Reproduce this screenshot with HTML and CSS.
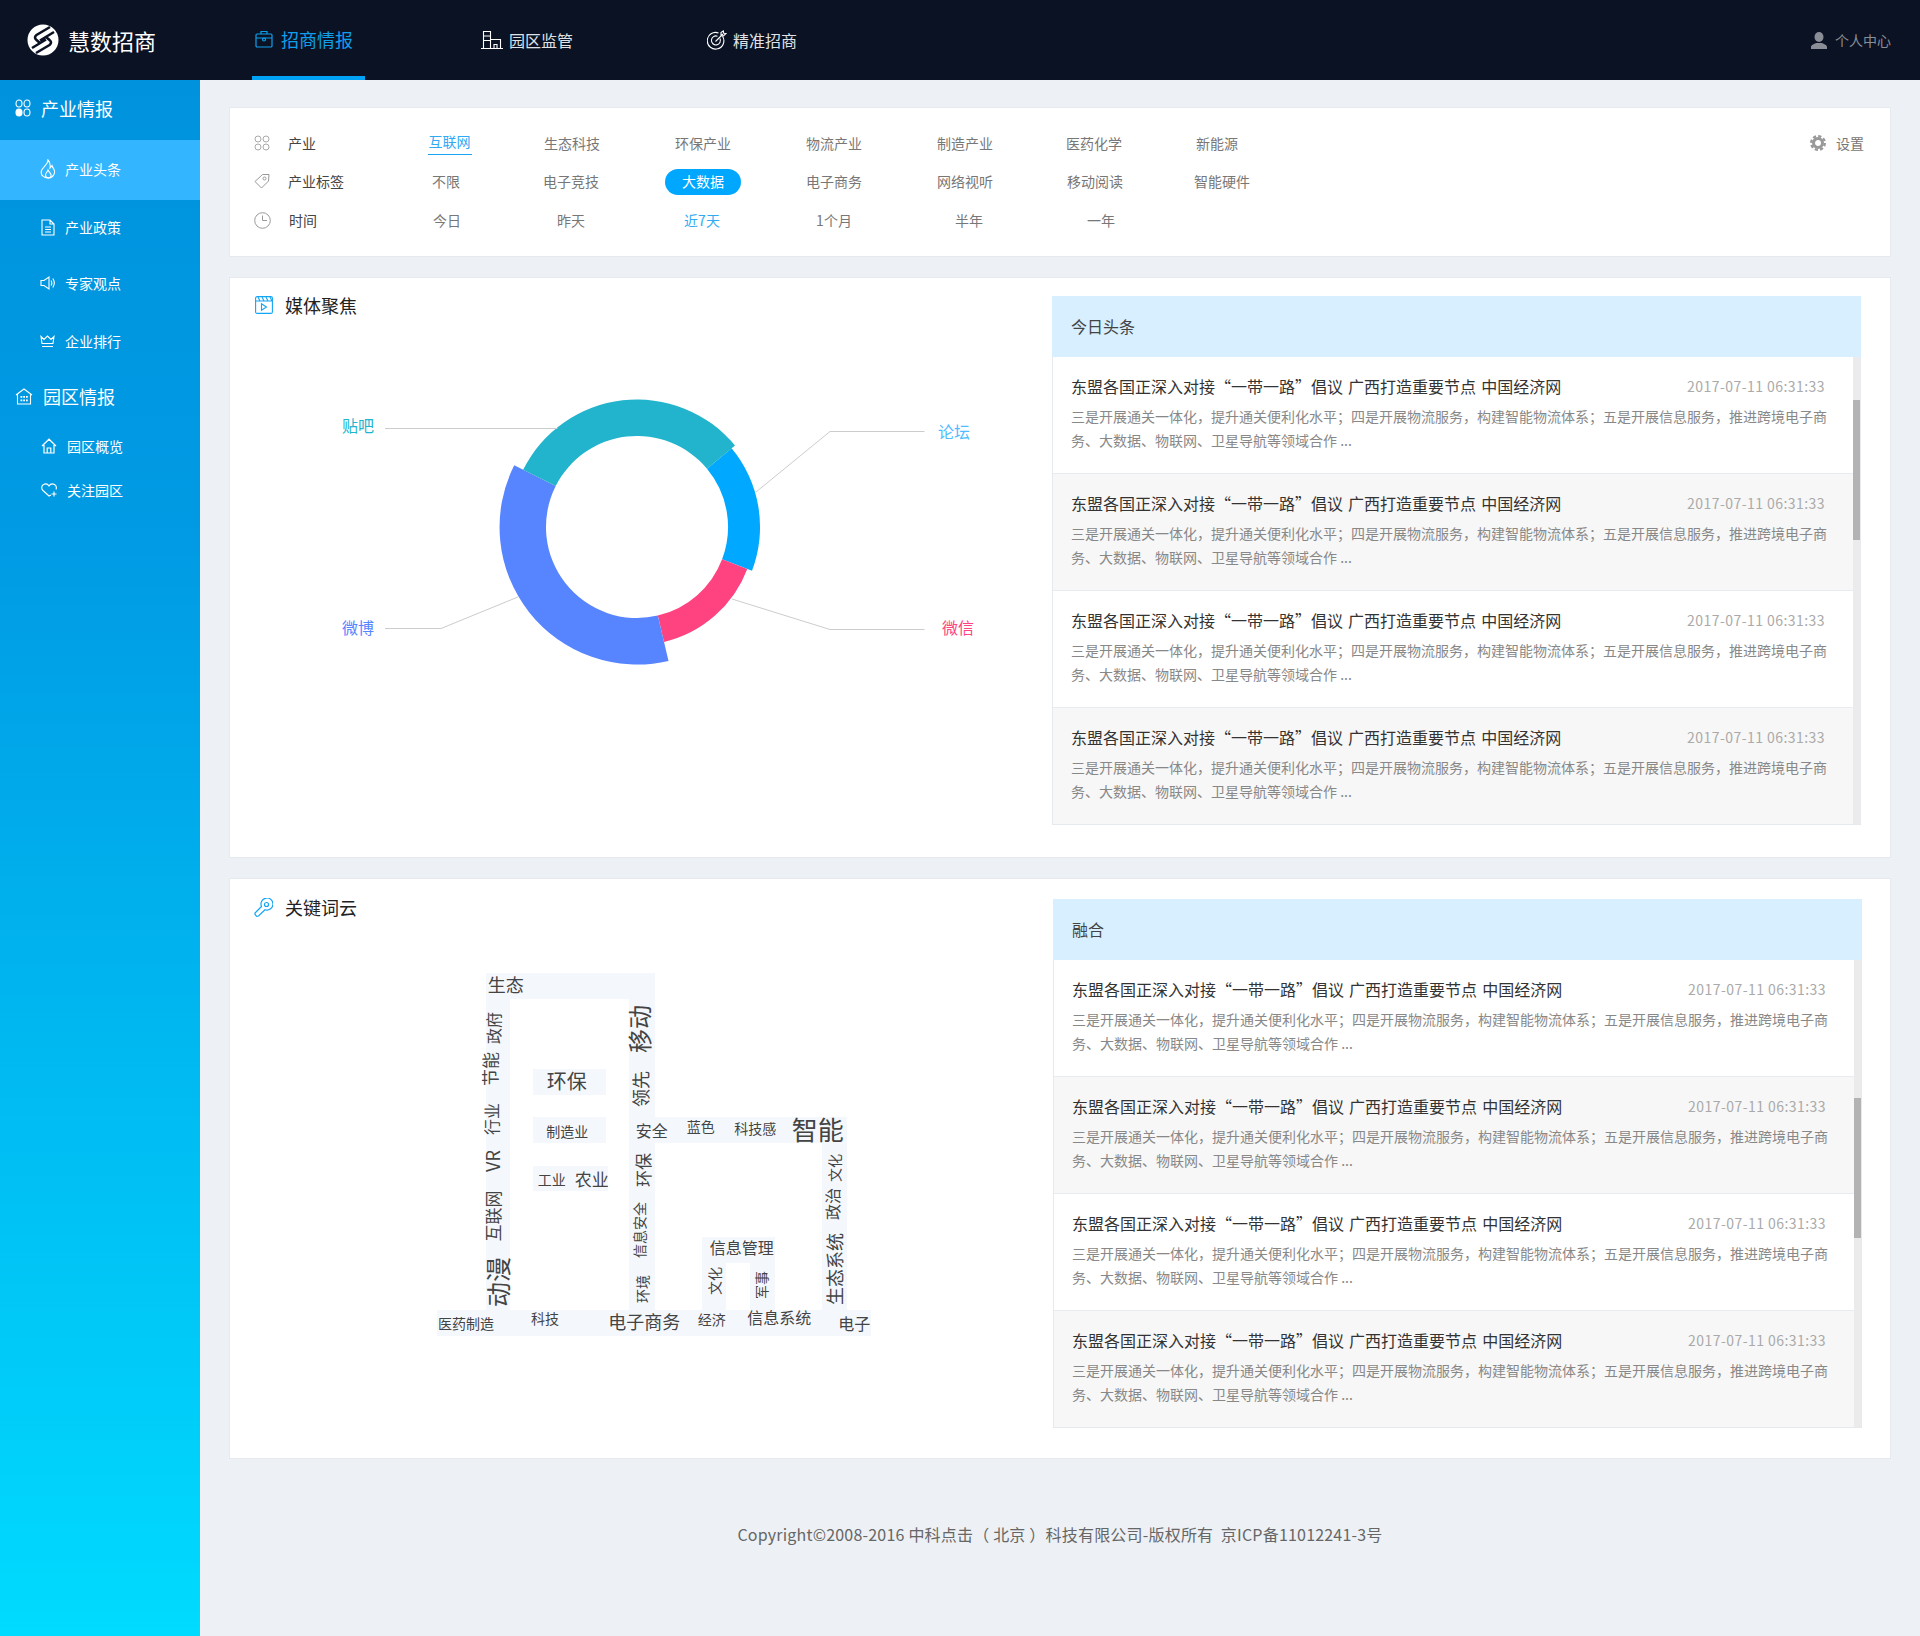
FILE: index.html
```html
<!DOCTYPE html>
<html lang="zh-CN">
<head>
  <meta charset="UTF-8">
  <title>慧数招商</title>
  <link rel="stylesheet" href="styles.css">
</head>
<body>

  <!-- 顶部导航 -->
  <header class="topbar">
    <div class="brand">
      <svg class="brand-logo" viewBox="0 0 32 32">
        <circle cx="16" cy="16" r="15.5" fill="#fff"/>
        <path d="M23 3 L9.5 11 Q6.5 13.5 9.5 16 L13.5 19.5 M27 8 L13 16.5 M9 29 L22.5 21 Q25.5 18.5 22.5 16 L18.5 12.5 M5 24 L19 15.5" fill="none" stroke="#0b1224" stroke-width="2.6"/>
      </svg>
      <span class="brand-name">慧数招商</span>
    </div>
    <nav class="topnav">
      <a class="topnav-item active">
        <svg width="18" height="18" viewBox="0 0 18 18" fill="none" stroke="#0f9fec" stroke-width="1.2">
          <rect x="1" y="4" width="16" height="13" rx="1"/>
          <path d="M6 4V1.5h6V4M1 8h16"/>
          <circle cx="9" cy="9.5" r="1.5"/>
        </svg>
        招商情报
      </a>
      <a class="topnav-item second">
        <svg width="22" height="20" viewBox="0 0 22 20" fill="none" stroke="#fff" stroke-width="1.1">
          <path d="M0 18.5h22M2.5 18.5V1.5h7v17M2.5 6h7M2.5 10.5h7M9.5 9.5h10v9M13 18.5v-4h3v4"/>
        </svg>
        园区监管
      </a>
      <a class="topnav-item third">
        <svg width="20" height="20" viewBox="0 0 20 20" fill="none" stroke="#fff" stroke-width="1.1">
          <path d="M15.5 6.2A8.3 8.3 0 1 1 11.5 3"/>
          <path d="M13 8.5A4.5 4.5 0 1 1 10.5 6.2"/>
          <path d="M8.5 11.5L16 4M14 2.5V5.5L16.5 6L19 3.5L16.7 3.2L16.3 1Z"/>
        </svg>
        精准招商
      </a>
    </nav>
    <div class="user-link">
      <svg width="16" height="17" viewBox="0 0 16 17" fill="#8a8d96">
        <ellipse cx="8" cy="5" rx="4.5" ry="5"/>
        <path d="M0 17v-2c0-2 3-3 5-4h6c2 1 5 2 5 4v2z"/>
      </svg>
      个人中心
    </div>
  </header>

  <div class="layout">

    <!-- 左侧菜单 -->
    <aside class="sidebar">
      <div class="side-group first">
        <svg width="16" height="18" viewBox="0 0 16 18" fill="none" stroke="#fff" stroke-width="1.1">
          <ellipse cx="4" cy="4.5" rx="3" ry="3.5"/>
          <ellipse cx="12" cy="4.5" rx="3" ry="3.5"/>
          <ellipse cx="4" cy="13.5" rx="3" ry="3.5" fill="#fff"/>
          <ellipse cx="12" cy="13.5" rx="3" ry="3.5"/>
        </svg>
        产业情报
      </div>
      <a class="side-item active">
        <svg width="16" height="20" viewBox="0 0 16 20" fill="none" stroke="#fff" stroke-width="1.1">
          <path d="M8 1C8.5 5 3 7.5 1.5 11.5C0 16 4 19 8 19C12 19 15 16 14.5 12C14 9.5 12.5 8.5 12 6.5C11 8 10.5 8.5 10 9C10.5 6 10 3 8 1Z"/>
          <path d="M8 11C7.5 13 5.5 14 5.5 16C5.5 18 7 19 8.5 19C10 19 11.5 17.5 11 15.5C10.5 14 9 13 8 11Z"/>
        </svg>
        产业头条
      </a>
      <a class="side-item">
        <svg width="16" height="17" viewBox="-1 0 16 17" fill="none" stroke="#fff" stroke-width="1.1">
          <path d="M1 1h8l4 4v11H1zM9 1v4h4M4 8h6M4 10.5h6M4 13h6"/>
        </svg>
        产业政策
      </a>
      <a class="side-item">
        <svg width="16" height="16" viewBox="0 0 16 16" fill="none" stroke="#fff" stroke-width="1.1">
          <path d="M1 5.5h3L9 2v12L4 10.5H1zM11 5.5c1 1.500 1 3.500 0 5M12.800 3.500c2 3 2 6 0 9"/>
        </svg>
        专家观点
      </a>
      <a class="side-item tall">
        <svg width="15" height="13" viewBox="0 0 15 13" fill="none" stroke="#fff" stroke-width="1.1">
          <path d="M1 1.500L4 4.500L7.500 1L11 4.500L14 1.500L13 8.500H2zM2 11.500h11"/>
        </svg>
        企业排行
      </a>
      <div class="side-group">
        <svg width="18" height="17" viewBox="0 0 18 17" fill="none" stroke="#fff" stroke-width="1.1">
          <path d="M1 7L9 1l8 6M2.500 6v10h13V6"/>
          <path d="M5.500 8h1.800v1.800H5.500zM8.200 8h1.800v1.800H8.200zM11 8h1.800v1.800H11zM5.500 11.500h1.800v1.800H5.500zM8.200 11.500h1.800v1.800H8.200zM11 11.500h1.800v1.800H11z" fill="#fff" stroke="none"/>
        </svg>
        园区情报
      </div>
      <a class="side-item park">
        <svg width="16" height="16" viewBox="0 0 16 16" fill="none" stroke="#fff" stroke-width="1.2">
          <path d="M1 8L8 1.200L15 8M3 7v8h10V7M6.200 15v-5h3.600v5"/>
        </svg>
        园区概览
      </a>
      <a class="side-item park short">
        <svg width="16" height="14" viewBox="0 0 16 14" fill="none" stroke="#fff" stroke-width="1.1">
          <path d="M10 12L8 13L2 7.500C0 5.500 .5 2.800 2.500 1.500C4.500 .5 6.800 1 8 3C9.200 1 11.500 .5 13.500 1.500C15 2.500 15.800 4.500 15 6.500"/>
          <path d="M13 8.500v5M10.500 11h5"/>
        </svg>
        关注园区
      </a>
    </aside>

    <main class="content">

      <!-- 筛选条件 -->
      <section class="card filter-card">
        <div class="filter-table">
          <div class="filter-row row-industry">
            <div class="filter-label">
              <svg width="16" height="16" viewBox="0 0 16 16" fill="none" stroke="#aaa" stroke-width="1">
                <circle cx="4" cy="4" r="3"/><circle cx="12" cy="4" r="3"/>
                <circle cx="4" cy="12" r="3"/><circle cx="12" cy="12" r="3"/>
              </svg>
              产业
            </div>
            <div class="opt"><span class="on underline">互联网</span></div>
            <div class="opt">生态科技</div>
            <div class="opt">环保产业</div>
            <div class="opt">物流产业</div>
            <div class="opt">制造产业</div>
            <div class="opt">医药化学</div>
            <div class="opt">新能源</div>
          </div>
          <div class="filter-row row-tag">
            <div class="filter-label">
              <svg width="16" height="16" viewBox="0 0 16 16" fill="none" stroke="#999" stroke-width="1">
                <path d="M1 8.500L8.500 1.500L15 1.500L14.500 8L7.500 15Z"/>
                <circle cx="10.500" cy="5.500" r="1.500"/>
              </svg>
              产业标签
            </div>
            <div class="opt">不限</div>
            <div class="opt">电子竞技</div>
            <div class="opt"><span class="pill">大数据</span></div>
            <div class="opt">电子商务</div>
            <div class="opt">网络视听</div>
            <div class="opt">移动阅读</div>
            <div class="opt">智能硬件</div>
          </div>
          <div class="filter-row row-time">
            <div class="filter-label">
              <svg width="17" height="17" viewBox="0 0 17 17" fill="none" stroke="#999" stroke-width="1">
                <circle cx="8.500" cy="8.500" r="7.800"/>
                <path d="M8.500 3.500v5h4.500"/>
              </svg>
              时间
            </div>
            <div class="opt">今日</div>
            <div class="opt">昨天</div>
            <div class="opt"><span class="on">近7天</span></div>
            <div class="opt">1个月</div>
            <div class="opt">半年</div>
            <div class="opt">一年</div>
          </div>
        </div>
        <div class="settings">
          <svg width="16" height="16" viewBox="0 0 16 16" fill="none" stroke="#999">
            <circle cx="8" cy="8" r="4.500" stroke-width="3"/>
            <circle cx="8" cy="8" r="6.800" stroke-width="2.400" stroke-dasharray="3.200 2.140"/>
          </svg>
          设置
        </div>
      </section>

      <!-- 媒体聚焦 -->
      <section class="card split">
        <div class="split-left">
          <h2 class="card-title">
            <svg width="18" height="18" viewBox="0 0 18 18" fill="none" stroke="#12a5f5" stroke-width="1.100">
              <rect x=".6" y=".6" width="16.800" height="16.800" rx="1.500"/>
              <path d="M.6 5h16.800M3 1l2 4M7 1l2 4M11 1l2 4M15 1l2 4"/>
              <path d="M6.500 7.800L11.500 11L6.500 14.200Z"/>
            </svg>
            媒体聚焦
          </h2>
          <svg class="pie-chart" width="822" height="340" viewBox="230 340 822 340">
            <g transform="translate(637 527)">
              <path fill="#00a8ff" d="M94.600 -78.700A123 123 0 0 1 115 43.700L85.100 32.300A91 91 0 0 0 70 -58.200Z"/>
              <path fill="#ff4381" d="M110.300 41.900A118 118 0 0 1 27 114.900L20.800 88.600A91 91 0 0 0 85.100 32.300Z"/>
              <path fill="#5784ff" d="M31.500 133.900A137.500 137.500 0 0 1 -122.800 -61.700L-81.300 -40.900A91 91 0 0 0 20.800 88.600Z"/>
              <path fill="#22b4cc" d="M-113.900 -57.200A127.500 127.500 0 0 1 98 -81.600L70 -58.200A91 91 0 0 0 -81.300 -40.900Z"/>
            </g>
            <g fill="none" stroke="#ccc">
              <path d="M385 428.500H557.500"/>
              <path d="M924.500 431.500H830L756 492"/>
              <path d="M924.500 629.500H830L732 599"/>
              <path d="M385 628.500H441L518 597"/>
            </g>
            <text class="pie-label" x="342" y="432" fill="#22b4cc">贴吧</text>
            <text class="pie-label" x="938" y="438" fill="#4fbdff">论坛</text>
            <text class="pie-label" x="942" y="634" fill="#ff4381">微信</text>
            <text class="pie-label" x="342" y="634" fill="#5784ff">微博</text>
          </svg>
        </div>
        <div class="panel">
          <div class="panel-head">今日头条</div>
          <div class="panel-list">
            <div class="news-row">
              <div class="news-top"><span class="news-title">东盟各国正深入对接“一带一路”倡议 广西打造重要节点 中国经济网</span><span class="news-date">2017-07-11 06:31:33</span></div>
              <p class="news-desc">三是开展通关一体化，提升通关便利化水平；四是开展物流服务，构建智能物流体系；五是开展信息服务，推进跨境电子商务、大数据、物联网、卫星导航等领域合作 ...</p>
            </div>
            <div class="news-row">
              <div class="news-top"><span class="news-title">东盟各国正深入对接“一带一路”倡议 广西打造重要节点 中国经济网</span><span class="news-date">2017-07-11 06:31:33</span></div>
              <p class="news-desc">三是开展通关一体化，提升通关便利化水平；四是开展物流服务，构建智能物流体系；五是开展信息服务，推进跨境电子商务、大数据、物联网、卫星导航等领域合作 ...</p>
            </div>
            <div class="news-row">
              <div class="news-top"><span class="news-title">东盟各国正深入对接“一带一路”倡议 广西打造重要节点 中国经济网</span><span class="news-date">2017-07-11 06:31:33</span></div>
              <p class="news-desc">三是开展通关一体化，提升通关便利化水平；四是开展物流服务，构建智能物流体系；五是开展信息服务，推进跨境电子商务、大数据、物联网、卫星导航等领域合作 ...</p>
            </div>
            <div class="news-row">
              <div class="news-top"><span class="news-title">东盟各国正深入对接“一带一路”倡议 广西打造重要节点 中国经济网</span><span class="news-date">2017-07-11 06:31:33</span></div>
              <p class="news-desc">三是开展通关一体化，提升通关便利化水平；四是开展物流服务，构建智能物流体系；五是开展信息服务，推进跨境电子商务、大数据、物联网、卫星导航等领域合作 ...</p>
            </div>
            <div class="scroll-thumb"></div>
          </div>
        </div>
      </section>

      <!-- 关键词云 -->
      <section class="card split keyword">
        <div class="split-left">
          <h2 class="card-title">
            <svg width="19" height="19" viewBox="0 0 19 19" fill="none" stroke="#12a5f5" stroke-width="1.200">
              <path d="M7.500 8.500L1 15v1.500L2.700 18.300L4.500 18L11 11.700A6 6 0 1 0 7.500 8.500Z"/>
              <circle cx="12.500" cy="6.500" r="2"/>
            </svg>
            关键词云
          </h2>
          <svg class="word-cloud" width="823" height="400" viewBox="230 960 823 400">
            <g fill="#f4f8fd">
              <rect x="486" y="973" width="169" height="26"/>
              <rect x="486" y="999" width="24" height="311"/>
              <rect x="629" y="999" width="26" height="311"/>
              <rect x="629" y="1117" width="218" height="26"/>
              <rect x="822" y="1143" width="25" height="167"/>
              <rect x="437" y="1310" width="434" height="26"/>
              <rect x="702" y="1237" width="73" height="26"/>
              <rect x="702" y="1263" width="24" height="47"/>
              <rect x="750" y="1263" width="25" height="47"/>
              <rect x="533" y="1069" width="73" height="26"/>
              <rect x="533" y="1117" width="73" height="26"/>
              <rect x="533" y="1166" width="75" height="25"/>
            </g>
            <g class="words">
              <text x="505.700" y="984" font-size="18">生态</text>
              <text x="492.500" y="1028" font-size="16" transform="rotate(-90 492.500 1028)">政府</text>
              <text x="489.200" y="1069" font-size="17" transform="rotate(-90 489.200 1069)">节能</text>
              <text x="491.200" y="1119" font-size="16" transform="rotate(-90 491.200 1119)">行业</text>
              <text x="491.500" y="1161" font-size="18" transform="rotate(-90 491.500 1161)">VR</text>
              <text x="492.500" y="1216" font-size="17" transform="rotate(-90 492.500 1216)">互联网</text>
              <text x="496.500" y="1282" font-size="25" transform="rotate(-90 496.500 1282)">动漫</text>
              <text x="638.500" y="1029" font-size="24" transform="rotate(-90 638.500 1029)">移动</text>
              <text x="640.200" y="1089" font-size="18" transform="rotate(-90 640.200 1089)">领先</text>
              <text x="651.700" y="1130" font-size="16">安全</text>
              <text x="700.700" y="1125.700" font-size="14">蓝色</text>
              <text x="755.300" y="1128" font-size="14">科技感</text>
              <text x="817.700" y="1128" font-size="26">智能</text>
              <text x="642.500" y="1170" font-size="17" transform="rotate(-90 642.500 1170)">环保</text>
              <text x="639.200" y="1230" font-size="14" transform="rotate(-90 639.200 1230)">信息安全</text>
              <text x="641.800" y="1289" font-size="14" transform="rotate(-90 641.800 1289)">环境</text>
              <text x="833.500" y="1168" font-size="14" transform="rotate(-90 833.500 1168)">文化</text>
              <text x="831.800" y="1204" font-size="16" transform="rotate(-90 831.800 1204)">政治</text>
              <text x="833.500" y="1269" font-size="18" transform="rotate(-90 833.500 1269)">生态系统</text>
              <text x="741.700" y="1246.700" font-size="16">信息管理</text>
              <text x="713.500" y="1281" font-size="14" transform="rotate(-90 713.500 1281)">文化</text>
              <text x="761.200" y="1285" font-size="14" transform="rotate(-90 761.200 1285)">军事</text>
              <text x="566.700" y="1080.700" font-size="20">环保</text>
              <text x="567.300" y="1130.700" font-size="14">制造业</text>
              <text x="551.700" y="1179" font-size="14">工业</text>
              <text x="591.700" y="1178.300" font-size="17">农业</text>
              <text x="466" y="1323" font-size="14">医药制造</text>
              <text x="545" y="1318" font-size="14">科技</text>
              <text x="644.300" y="1321.300" font-size="18">电子商务</text>
              <text x="711.700" y="1319" font-size="14">经济</text>
              <text x="779.300" y="1317.300" font-size="16">信息系统</text>
              <text x="854.300" y="1323" font-size="16">电子</text>
            </g>
          </svg>
        </div>
        <div class="panel">
          <div class="panel-head">融合</div>
          <div class="panel-list">
            <div class="news-row">
              <div class="news-top"><span class="news-title">东盟各国正深入对接“一带一路”倡议 广西打造重要节点 中国经济网</span><span class="news-date">2017-07-11 06:31:33</span></div>
              <p class="news-desc">三是开展通关一体化，提升通关便利化水平；四是开展物流服务，构建智能物流体系；五是开展信息服务，推进跨境电子商务、大数据、物联网、卫星导航等领域合作 ...</p>
            </div>
            <div class="news-row">
              <div class="news-top"><span class="news-title">东盟各国正深入对接“一带一路”倡议 广西打造重要节点 中国经济网</span><span class="news-date">2017-07-11 06:31:33</span></div>
              <p class="news-desc">三是开展通关一体化，提升通关便利化水平；四是开展物流服务，构建智能物流体系；五是开展信息服务，推进跨境电子商务、大数据、物联网、卫星导航等领域合作 ...</p>
            </div>
            <div class="news-row">
              <div class="news-top"><span class="news-title">东盟各国正深入对接“一带一路”倡议 广西打造重要节点 中国经济网</span><span class="news-date">2017-07-11 06:31:33</span></div>
              <p class="news-desc">三是开展通关一体化，提升通关便利化水平；四是开展物流服务，构建智能物流体系；五是开展信息服务，推进跨境电子商务、大数据、物联网、卫星导航等领域合作 ...</p>
            </div>
            <div class="news-row">
              <div class="news-top"><span class="news-title">东盟各国正深入对接“一带一路”倡议 广西打造重要节点 中国经济网</span><span class="news-date">2017-07-11 06:31:33</span></div>
              <p class="news-desc">三是开展通关一体化，提升通关便利化水平；四是开展物流服务，构建智能物流体系；五是开展信息服务，推进跨境电子商务、大数据、物联网、卫星导航等领域合作 ...</p>
            </div>
            <div class="scroll-thumb lower"></div>
          </div>
        </div>
      </section>

      <footer class="footer">Copyright©2008-2016 中科点击（ 北京 ）科技有限公司-版权所有&nbsp;&nbsp;京ICP备11012241-3号</footer>
    </main>
  </div>

</body>
</html>
```

FILE: styles.css
```css
* {
  margin: 0;
  padding: 0;
  box-sizing: border-box;
}

body {
  font-family: "Noto Sans CJK SC", "Liberation Sans", sans-serif;
  background-color: #edf1f5;
  color: #444;
  font-size: 14px;
}

svg {
  flex-shrink: 0;
}

/* 顶部导航 */
.topbar {
  display: flex;
  align-items: center;
  height: 80px;
  background-color: #0b1224;
  color: #fff;
}

.brand {
  display: flex;
  align-items: center;
  width: 252px;
  padding-left: 27px;
}

.brand-logo {
  width: 32px;
  height: 32px;
}

.brand-name {
  margin-left: 9px;
  font-size: 22px;
}

.topnav {
  display: flex;
  height: 100%;
}

.topnav-item {
  display: flex;
  align-items: center;
  gap: 6px;
  height: 80px;
  font-size: 16px;
  color: #dfe1e6;
}

.topnav-item.active {
  width: 113px;
  padding-left: 3px;
  gap: 8px;
  font-size: 18px;
  color: #0f9fec;
  border-bottom: 4px solid #00a2f5;
  padding-top: 2px;
}

.topnav-item.second {
  margin-left: 116px;
}

.topnav-item.third {
  margin-left: 134px;
}

.user-link {
  display: flex;
  align-items: center;
  gap: 8px;
  margin-left: auto;
  padding-right: 29px;
  color: #8a8d96;
}

/* 左侧菜单 */
.layout {
  display: flex;
  min-height: 1556px;
}

.sidebar {
  width: 200px;
  flex-shrink: 0;
  background: linear-gradient(180deg, #0092dd 0%, #009be4 30%, #00dbff 100%);
  color: #fff;
}

.side-group {
  display: flex;
  align-items: center;
  gap: 10px;
  height: 50px;
  padding: 0 0 2px 15px;
  font-size: 18px;
}

.side-group.first {
  height: 60px;
  padding-bottom: 5px;
}

.side-item {
  display: flex;
  align-items: center;
  gap: 9px;
  height: 56px;
  padding: 0 0 2px 40px;
}

.side-item.active {
  height: 60px;
  background-color: #33b5ff;
}

.side-item.tall {
  height: 60px;
  gap: 10px;
}

.side-item.park {
  height: 50px;
  padding-left: 41px;
  gap: 10px;
}

.side-item.short {
  height: 38px;
}

/* 内容区 */
.content {
  flex: 1;
  padding: 27px 29px 0;
}

.card {
  background-color: #fff;
  border: 1px solid #e6e9ee;
  margin-bottom: 20px;
}

/* 筛选条件 */
.filter-card {
  display: flex;
  justify-content: space-between;
  height: 150px;
  padding-top: 16px;
}

.filter-row {
  display: grid;
  align-items: center;
  height: 38px;
}

/* 每行选项的位置略有不同 */
.row-industry {
  grid-template-columns: 162px 115px 130px 132px 130px 132px 126px 120px;
}

.row-tag {
  grid-template-columns: 162px 108px 142px 122px 140px 122px 138px 116px;
}

.row-time {
  height: 40px;
  grid-template-columns: 162px 110px 138px 124px 140px 130px 134px;
}

.filter-label {
  display: flex;
  align-items: center;
  gap: 18px;
  padding-left: 24px;
  color: #444;
}

.opt {
  text-align: center;
  color: #777;
}

.on {
  color: #30aaf5;
}

.underline {
  display: inline-block;
  padding: 0 1px 2px;
  border-bottom: 1px solid #1aa3f0;
  line-height: 21px;
}

.pill {
  display: inline-block;
  width: 76px;
  height: 26px;
  margin-top: 2px;
  line-height: 24px;
  border-radius: 13px;
  background-color: #00a7ff;
  color: #fff;
}

.settings {
  display: flex;
  align-items: center;
  gap: 10px;
  height: 38px;
  padding-right: 26px;
  color: #777;
}

/* 左右分栏 */
.split {
  display: flex;
  height: 581px;
}

.split-left {
  width: 822px;
}

.keyword .split-left {
  width: 823px;
}

.card-title {
  display: flex;
  align-items: center;
  gap: 12px;
  height: 20px;
  margin: 17px 0 25px 25px;
  font-size: 18px;
  font-weight: normal;
  color: #222;
}

.keyword .card-title {
  margin: 18px 0 43px 24px;
}

.pie-chart,
.word-cloud {
  display: block;
}

.pie-label {
  font-size: 16px;
}

.words text {
  fill: #444;
  text-anchor: middle;
  dominant-baseline: central;
}

/* 资讯列表 */
.panel {
  width: 809px;
  height: 529px;
  margin-top: 18px;
  border: 1px solid #e6e9ee;
  border-top: 0;
}

.keyword .panel {
  margin-top: 20px;
}

.panel-head {
  height: 61px;
  line-height: 61px;
  margin: 0 -1px;
  padding-left: 19px;
  font-size: 16px;
  background-color: #d7effe;
  color: #444;
}

.panel-list {
  position: relative;
  height: 467px;
  overflow: hidden;
  padding-right: 7px;
  background-color: #ebebeb;
}

.scroll-thumb {
  position: absolute;
  top: 43px;
  right: 0;
  width: 7px;
  height: 140px;
  background-color: #b3b3b3;
}

.scroll-thumb.lower {
  top: 138px;
}

.news-row {
  height: 117px;
  padding: 17px 24px 0 18px;
  background-color: #fff;
  border-bottom: 1px solid #e8ebf0;
}

.news-row:nth-child(even) {
  background-color: #f7f7f7;
}

.news-top {
  display: flex;
  justify-content: space-between;
  line-height: 24px;
  padding-right: 4px;
}

.news-title {
  font-size: 16px;
  word-spacing: 1.5px;
  color: #333;
}

.news-date {
  letter-spacing: .45px;
  color: #aaa;
}

.news-desc {
  margin-top: 6px;
  line-height: 24px;
  color: #888;
}

/* 页脚 */
.footer {
  margin-top: 63px;
  text-align: center;
  font-size: 16px;
  letter-spacing: .2px;
  line-height: 24px;
  color: #666;
}
```
